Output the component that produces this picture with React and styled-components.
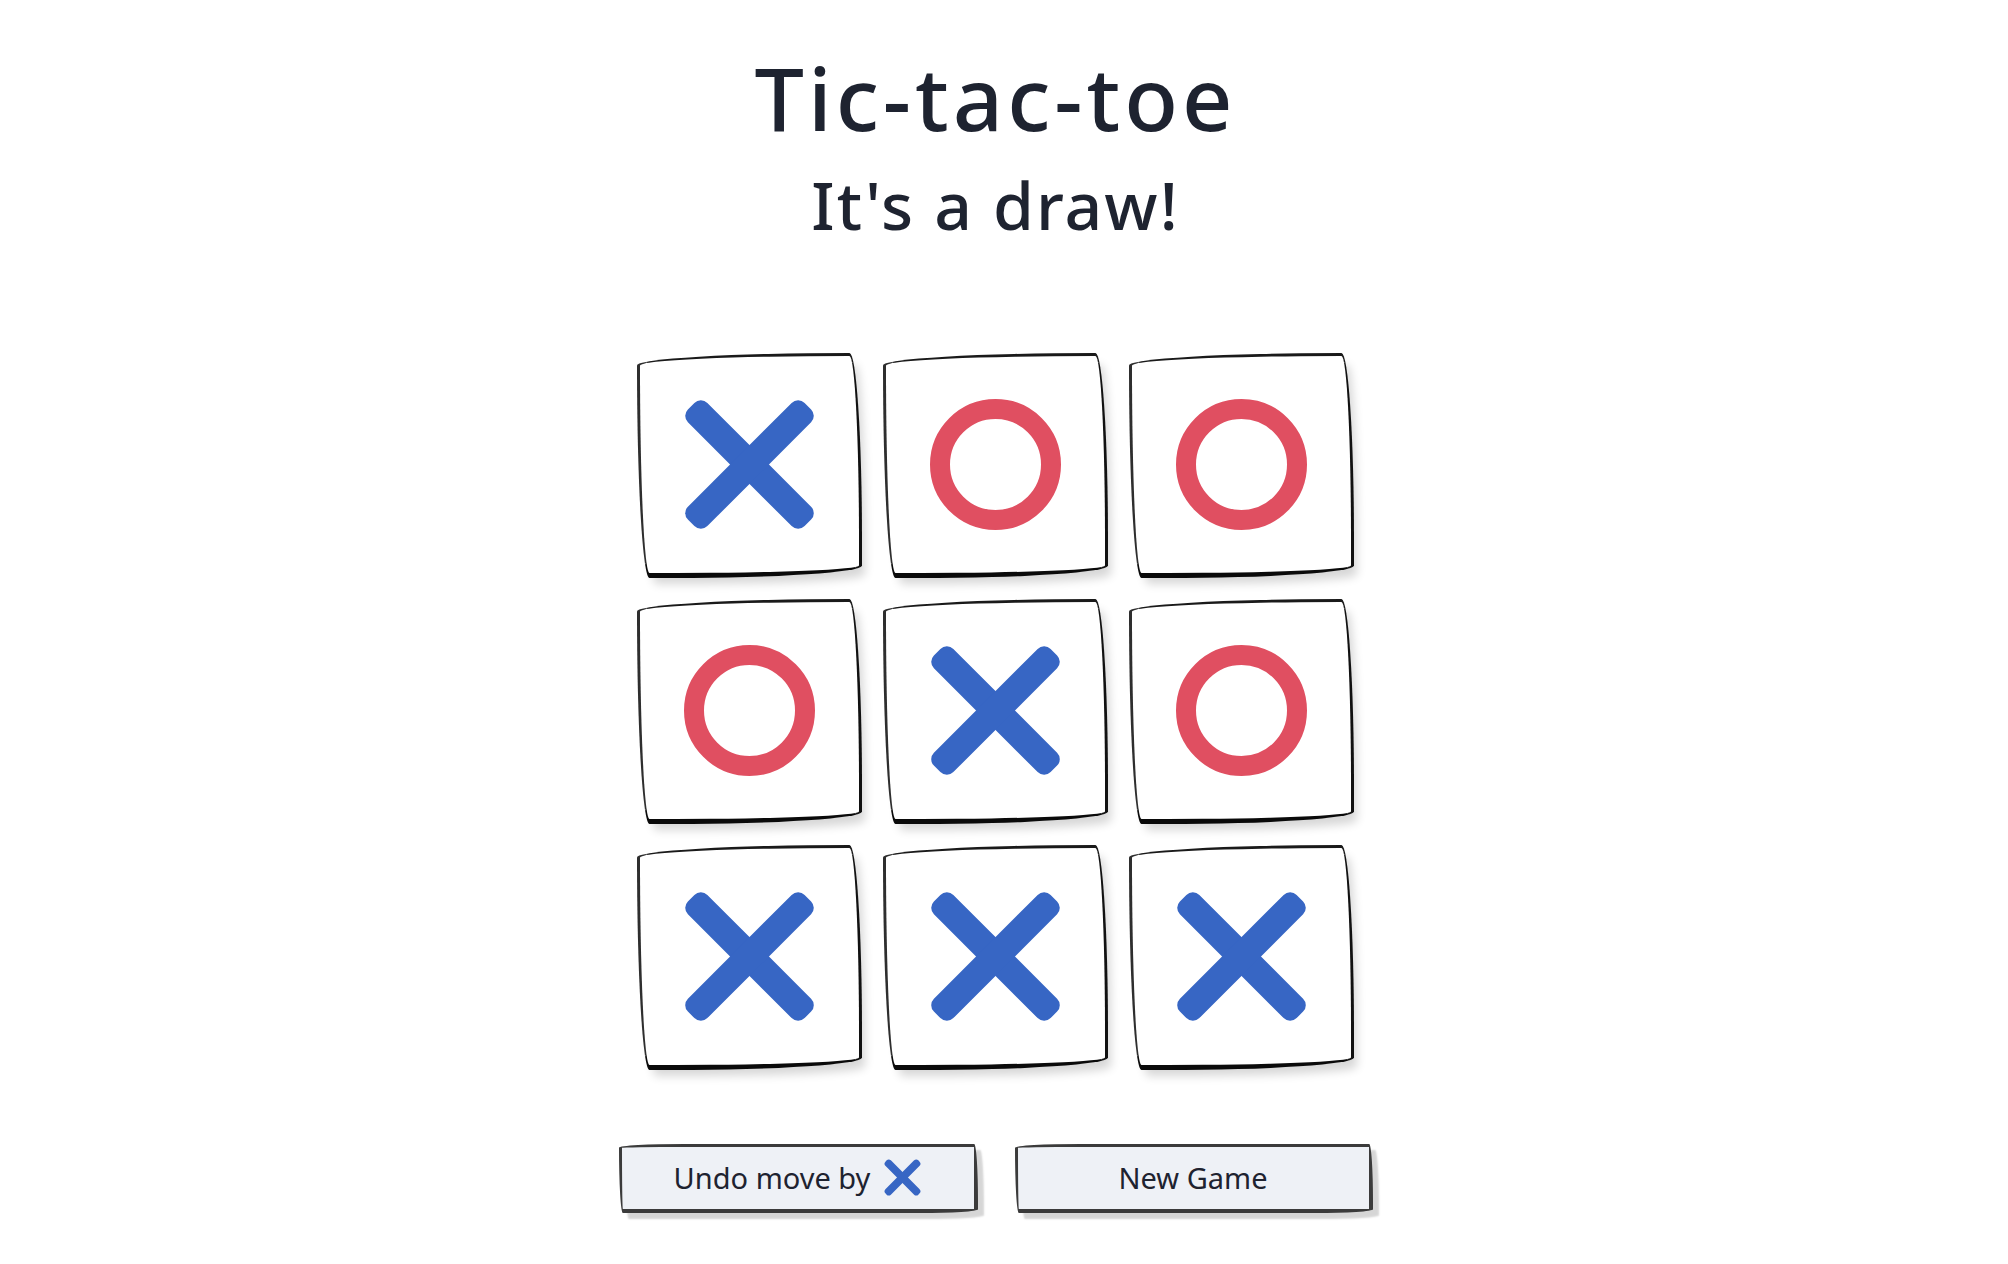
import React, { useState } from 'react';
import styled, { createGlobalStyle } from 'styled-components';

const GlobalStyle = createGlobalStyle`
  html, body {
    margin: 0;
    padding: 0;
    background: #ffffff;
  }
  body {
    font-family: 'Noto Sans', 'DejaVu Sans', sans-serif;
    color: #1e2330;
  }
`;

// hand-drawn looking outline, same trick as PaperCSS
const sketchRadius = `
  border-top-left-radius: 255px 15px;
  border-top-right-radius: 15px 225px;
  border-bottom-right-radius: 225px 15px;
  border-bottom-left-radius: 15px 255px;
`;

const Page = styled.main`
  display: flex;
  flex-direction: column;
  align-items: center;
  padding: 53px 17px 60px 0;
`;

const Title = styled.h1`
  margin: 0;
  font-size: 88px;
  line-height: 1;
  font-weight: 500;
  letter-spacing: 4px;
  color: #1e2330;
`;

const Status = styled.h2`
  margin: 30px 0 0;
  font-size: 66px;
  line-height: 1;
  font-weight: 500;
  letter-spacing: 2px;
  color: #1e2330;
`;

const Board = styled.div`
  margin-top: 116px;
  display: grid;
  grid-template-columns: repeat(3, 225px);
  grid-auto-rows: 225px;
  gap: 21px;
`;

const Cell = styled.button`
  box-sizing: border-box;
  display: flex;
  align-items: center;
  justify-content: center;
  padding: 0;
  background: #ffffff;
  border-style: solid;
  border-color: #1a1a1a #111111 #0a0a0a #2e2e2e;
  border-width: 3px 3px 5px 3px;
  ${sketchRadius}
  box-shadow: 6px 9px 10px -3px rgba(0, 0, 0, 0.16);
  cursor: pointer;
`;

const Controls = styled.div`
  margin-top: 74px;
  display: flex;
  gap: 37px;
`;

const ActionButton = styled.button`
  box-sizing: border-box;
  width: ${(p) => p.$width}px;
  height: 69px;
  display: flex;
  align-items: center;
  justify-content: center;
  gap: 14px;
  background: #eef1f6;
  border: solid #3b3b3b;
  border-width: 3px 4px 4px 3px;
  ${sketchRadius}
  box-shadow: 6px 6px 2px rgba(0, 0, 0, 0.16);
  font-family: 'Noto Sans', 'DejaVu Sans', sans-serif;
  font-size: 29px;
  color: #1e2330;
  cursor: pointer;
  padding: 0 0 2px;
`;

const MarkSvg = styled.svg`
  display: block;
  flex: none;
  overflow: visible;
`;

const XMark = ({ size = 131, thickness = 21, radius = 7 }) => (
  <MarkSvg width={size} height={size} viewBox="0 0 100 100" aria-label="X">
    <g fill="#3766c4" transform="rotate(45 50 50)">
      <rect x={50 - 63} y={50 - thickness / 2} width="126" height={thickness} rx={radius} />
      <rect x={50 - thickness / 2} y={50 - 63} width={thickness} height="126" rx={radius} />
    </g>
  </MarkSvg>
);

const OMark = ({ size = 131 }) => (
  <MarkSvg width={size} height={size} viewBox="0 0 131 131" aria-label="O">
    <circle cx="65.5" cy="65.5" r="55.5" fill="none" stroke="#e04f61" strokeWidth="20" />
  </MarkSvg>
);

const startBoard = ['X', 'O', 'O', 'O', 'X', 'O', 'X', 'X', 'X'];

const App = () => {
  const [squares] = useState(startBoard);

  return (
    <Page>
      <GlobalStyle />
      <Title>Tic-tac-toe</Title>
      <Status>It's a draw!</Status>
      <Board>
        {squares.map((value, index) => (
          <Cell key={index}>
            {value === 'X' && <XMark />}
            {value === 'O' && <OMark />}
          </Cell>
        ))}
      </Board>
      <Controls>
        <ActionButton $width={359}>
          Undo move by <XMark size={37} thickness={21} radius={9} />
        </ActionButton>
        <ActionButton $width={358}>New Game</ActionButton>
      </Controls>
    </Page>
  );
};

export default App;
